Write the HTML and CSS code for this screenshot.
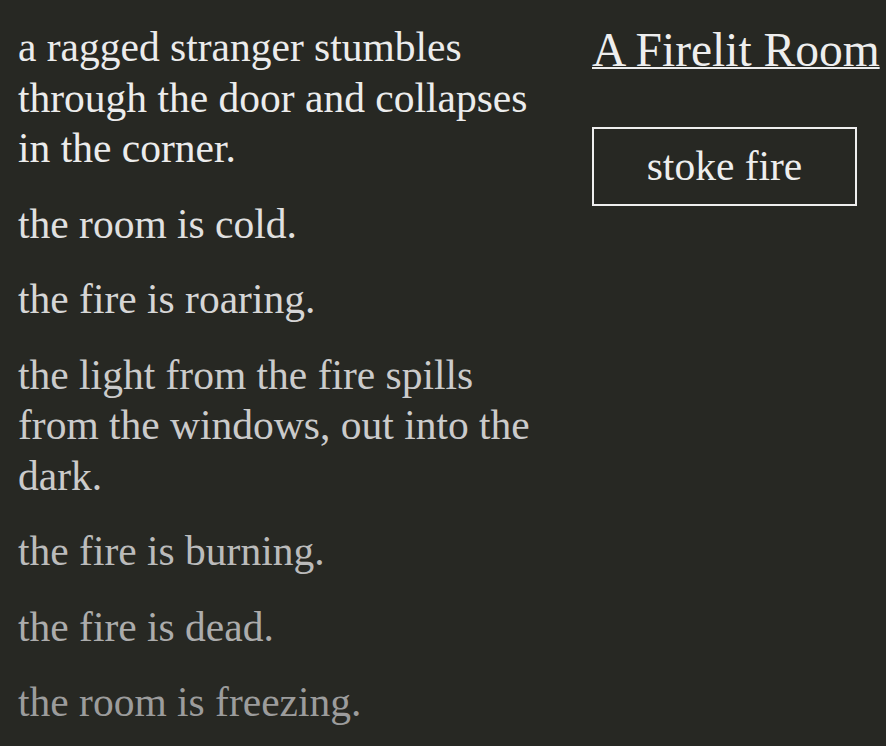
FILE: index.html
```html
<!DOCTYPE html>
<html>
<head>
<meta charset="utf-8">
<link rel="stylesheet" href="styles.css">
</head>
<body>
<div class="wrap">
  <div class="notifications">
    <div class="note n1">a ragged stranger stumbles through the door and collapses in the corner.</div>
    <div class="note n2">the room is cold.</div>
    <div class="note n3">the fire is roaring.</div>
    <div class="note n4">the light from the fire spills from the windows, out into the dark.</div>
    <div class="note n5">the fire is burning.</div>
    <div class="note n6">the fire is dead.</div>
    <div class="note n7">the room is freezing.</div>
  </div>
  <div class="main">
    <div class="title">A Firelit Room</div>
    <div class="button">stoke fire</div>
  </div>
</div>
</body>
</html>
```
FILE: styles.css
```css
html, body {
  margin: 0;
  padding: 0;
  background: #272823;
  color: #eeeeee;
  font-family: "Liberation Serif", "Times New Roman", serif;
  overflow: hidden;
}
.wrap {
  display: flex;
  padding: 22px 0 0 18px;
  gap: 54px;
}
.notifications {
  width: 520px;
  flex: none;
  font-size: 41.5px;
  line-height: 50.5px;
}
.note { margin-bottom: 25px; }
.n1 { color: #ececec; }
.n2 { color: #e0e0e0; }
.n3 { color: #d6d6d6; }
.n4 { color: #cbcbcb; }
.n5 { color: #bbbbbb; }
.n6 { color: #acacac; }
.n7 { color: #9c9c9c; }
.main { flex: none; padding-top: 2px; }
.title {
  font-size: 47.5px;
  line-height: 52px;
  text-decoration: underline;
  text-decoration-thickness: 2px;
}
.button {
  margin-top: 51px;
  width: 261px;
  height: 75px;
  border: 2px solid #eeeeee;
  font-size: 41.5px;
  line-height: 75px;
  text-align: center;
}
```
